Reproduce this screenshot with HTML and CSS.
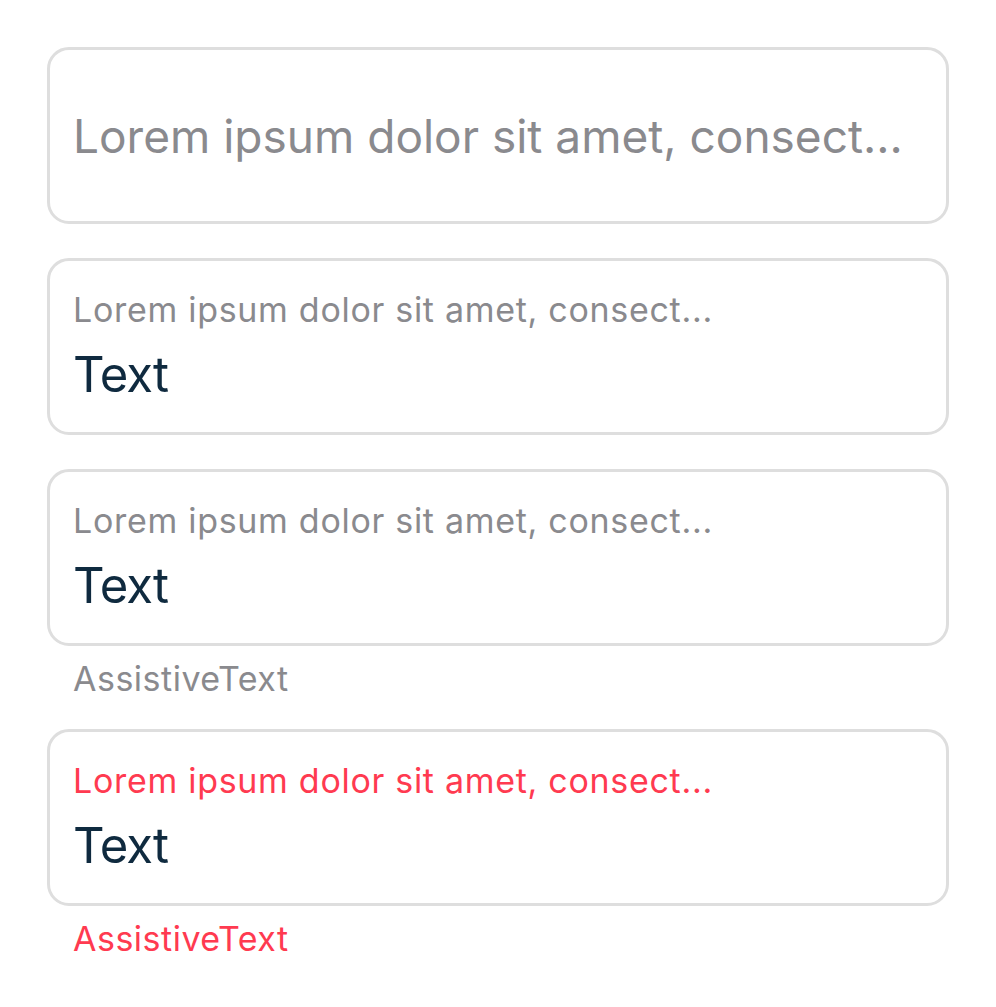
FILE: index.html
```html
<!DOCTYPE html>
<html>
<head>
<meta charset="utf-8">
<link rel="stylesheet" href="styles.css">
</head>
<body>
<div class="page">
  <div class="field">
    <div class="box box-empty">
      <span class="placeholder">Lorem ipsum dolor sit amet, consect...</span>
    </div>
  </div>
  <div class="field">
    <div class="box">
      <span class="label">Lorem ipsum dolor sit amet, consect...</span>
      <span class="value">Text</span>
    </div>
  </div>
  <div class="field">
    <div class="box">
      <span class="label">Lorem ipsum dolor sit amet, consect...</span>
      <span class="value">Text</span>
    </div>
    <div class="assist">AssistiveText</div>
  </div>
  <div class="field error">
    <div class="box">
      <span class="label">Lorem ipsum dolor sit amet, consect...</span>
      <span class="value">Text</span>
    </div>
    <div class="assist">AssistiveText</div>
  </div>
</div>
</body>
</html>
```
FILE: styles.css
```css
html, body {
  margin: 0;
  padding: 0;
  background: #ffffff;
}
body {
  font-family: Inter, "Noto Sans", sans-serif;
}
.page {
  width: 902px;
  padding: 47px 0 0 47px;
  display: flex;
  flex-direction: column;
  gap: 34px;
}
.field {
  display: flex;
  flex-direction: column;
}
.box {
  box-sizing: border-box;
  height: 177px;
  border: 3px solid #dedede;
  border-radius: 22px;
  padding: 29px 23px 0;
  display: flex;
  flex-direction: column;
}
.box-empty {
  padding-top: 0;
  justify-content: center;
}
.placeholder {
  font-size: 46px;
  line-height: 56px;
  color: #8a8a8e;
  white-space: nowrap;
}
.label {
  font-size: 34px;
  color: #8a8a8e;
  line-height: 40px;
  letter-spacing: 0.7px;
  white-space: nowrap;
}
.value {
  font-size: 49px;
  color: #0f2a3f;
  line-height: 60px;
  margin-top: 15px;
  letter-spacing: -1px;
}
.assist {
  font-size: 34px;
  color: #8a8a8e;
  padding: 17px 26px 0;
  line-height: 32px;
  letter-spacing: 0.5px;
}
.error .label, .error .assist {
  color: #ff3a50;
}
```
